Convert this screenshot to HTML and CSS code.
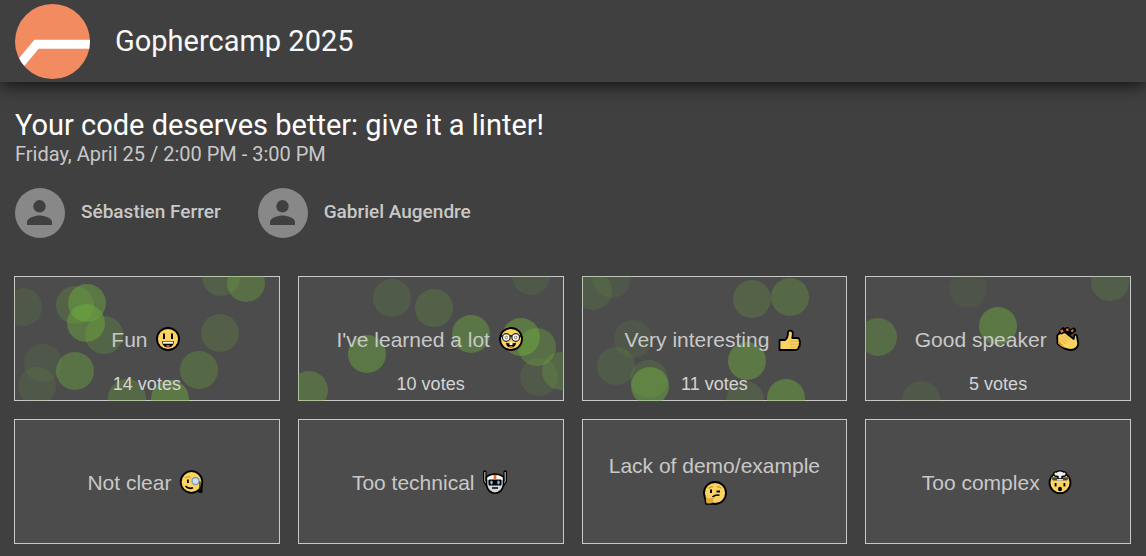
FILE: index.html
```html
<!DOCTYPE html>
<html lang="en">
<head>
<meta charset="utf-8">
<meta name="viewport" content="width=device-width, initial-scale=1">
<title>Gophercamp 2025</title>
<link rel="stylesheet" href="styles.css">
</head>
<body>
<header class="topbar">
  <svg class="logo" viewBox="0 0 75 75" aria-hidden="true">
    <defs><clipPath id="disc"><circle cx="37.500" cy="37.500" r="37.500"/></clipPath></defs>
    <g clip-path="url(#disc)"><path fill="#f28b60" d="M0 0h75v75H0z"/><path d="M0 66L21.500 40.300H76" fill="none" stroke="#fff" stroke-width="9"/></g>
  </svg>
  <h1 class="event">Gophercamp 2025</h1>
</header>
<main class="content">
  <h2 class="talk">Your code deserves better: give it a linter!</h2>
  <p class="time">Friday, April 25 / 2:00 PM - 3:00 PM</p>
  <ul class="speakers">
    <li class="speaker"><svg class="avatar" viewBox="0 0 50 50" aria-hidden="true"><circle cx="25" cy="25" r="25" fill="#888"/><circle cx="24.500" cy="18.300" r="6.200" fill="#404040"/><path fill="#404040" d="M12 37v-3c0-4.300 8.300-6.500 12.500-6.500S37 29.700 37 34v3z"/></svg><span class="name">Sébastien Ferrer</span></li>
    <li class="speaker"><svg class="avatar" viewBox="0 0 50 50" aria-hidden="true"><circle cx="25" cy="25" r="25" fill="#888"/><circle cx="24.500" cy="18.300" r="6.200" fill="#404040"/><path fill="#404040" d="M12 37v-3c0-4.300 8.300-6.500 12.500-6.500S37 29.700 37 34v3z"/></svg><span class="name">Gabriel Augendre</span></li>
  </ul>
  <div class="votes">
    <button type="button" class="card">
      <svg class="bubbles" aria-hidden="true"><circle cx="9" cy="31" r="19" opacity=".12"/><circle cx="61" cy="29" r="19" opacity=".22"/><circle cx="73" cy="27" r="19" opacity=".4"/><circle cx="72" cy="47" r="19" opacity=".4"/><circle cx="90" cy="59" r="19" opacity=".24"/><circle cx="29" cy="87" r="19" opacity=".09"/><circle cx="23" cy="110" r="19" opacity=".12"/><circle cx="61" cy="95" r="19" opacity=".36"/><circle cx="207" cy="1" r="19" opacity=".18"/><circle cx="232" cy="7" r="19" opacity=".32"/><circle cx="206" cy="57" r="19" opacity=".18"/><circle cx="185" cy="94" r="19" opacity=".28"/><circle cx="113" cy="122" r="19" opacity=".27"/><circle cx="156" cy="123" r="19" opacity=".42"/></svg>
      <span class="label">Fun <svg class="emoji" viewBox="0 0 24 24" aria-hidden="true"><circle cx="12" cy="12" r="11" fill="#fbd362" stroke="#000" stroke-width="1.800"/><path d="M7 6.500h2v5.500H7zM15 6.500h2v5.500h-2z"/><path d="M6.200 14.200h11.600c0 4-2.300 6-5.800 6s-5.800-2-5.800-6z"/><path fill="#fff" d="M7 14.700h10v2H7z"/><path fill="#ed6c30" d="M9.500 19q2.500-2 5 0-2.500 1.500-5 0z"/></svg></span>
      <span class="count">14 votes</span>
    </button>
    <button type="button" class="card">
      <svg class="bubbles" aria-hidden="true"><circle cx="94" cy="22" r="19" opacity=".15"/><circle cx="136" cy="32" r="19" opacity=".2"/><circle cx="233" cy="0" r="19" opacity=".12"/><circle cx="173" cy="58" r="19" opacity=".38"/><circle cx="69" cy="78" r="19" opacity=".4"/><circle cx="11" cy="114" r="19" opacity=".32"/><circle cx="223" cy="61" r="19" opacity=".42"/><circle cx="239" cy="71" r="19" opacity=".32"/><circle cx="241" cy="101" r="19" opacity=".13"/><circle cx="263" cy="95" r="19" opacity=".25"/></svg>
      <span class="label">I've learned a lot <svg class="emoji" viewBox="0 0 24 24" aria-hidden="true"><circle cx="12" cy="12" r="11" fill="#fbd362" stroke="#000" stroke-width="1.800"/><path d="M1 9h22" stroke="#000" stroke-width="1.500"/><g fill="#fff" stroke="#222" stroke-width="1.200"><circle cx="7.300" cy="10.500" r="3.800"/><circle cx="16.700" cy="10.500" r="3.800"/></g><g fill="none" stroke="#777"><circle cx="7.300" cy="10.500" r="1.300"/><circle cx="16.700" cy="10.500" r="1.300"/></g><path d="M7 15.700c3 .8 7 .8 10 0 0 3-2 4.800-5 4.800s-5-1.800-5-4.800z"/><path fill="#fff" d="M10.500 15.500h3V18h-3z"/><path fill="#ed6c30" d="M10 19.400q2-1.200 4 0-2 1-4 0z"/></svg></span>
      <span class="count">10 votes</span>
    </button>
    <button type="button" class="card">
      <svg class="bubbles" aria-hidden="true"><circle cx="11" cy="15" r="19" opacity=".14"/><circle cx="30" cy="3" r="19" opacity=".1"/><circle cx="170" cy="23" r="19" opacity=".22"/><circle cx="208" cy="21" r="19" opacity=".28"/><circle cx="51" cy="63" r="19" opacity=".1"/><circle cx="34" cy="90" r="19" opacity=".14"/><circle cx="67" cy="103" r="19" opacity=".16"/><circle cx="68" cy="110" r="19" opacity=".43"/><circle cx="165" cy="85" r="19" opacity=".42"/><circle cx="163" cy="124" r="19" opacity=".17"/><circle cx="204" cy="122" r="19" opacity=".42"/></svg>
      <span class="label">Very interesting <svg class="emoji" viewBox="0 0 24 24" aria-hidden="true"><path fill="#fbd362" stroke="#000" stroke-width="1.800" stroke-linejoin="round" d="M1.500 23V13H7c2-1.500 3-3.500 3-7V5c.5-2 4.500-2 4.800.8.200 2-.5 3.700-.5 5.200H19c2 0 2.800 1.300 2.300 2.600 1 .8 1 2.400.2 3.200.6 1.200.3 2.400-.7 3C20.800 22 19 23 17 23z"/><path d="M12 14.200h9M12 17.200h9M12 20h8" stroke="#dda93f" stroke-width=".9"/></svg></span>
      <span class="count">11 votes</span>
    </button>
    <button type="button" class="card">
      <svg class="bubbles" aria-hidden="true"><circle cx="103" cy="13" r="19" opacity=".08"/><circle cx="245" cy="6" r="19" opacity=".17"/><circle cx="133" cy="50" r="19" opacity=".42"/><circle cx="13" cy="61" r="19" opacity=".3"/><circle cx="56" cy="124" r="19" opacity=".12"/></svg>
      <span class="label">Good speaker <svg class="emoji" viewBox="0 0 24 24" aria-hidden="true"><path d="M5.300 5.200l2-2.200M11.300 4.500V2.500M14.500 5.200l3-2" stroke="#000" stroke-width="5" stroke-linecap="round"/><path fill="#fbd362" stroke="#000" stroke-width="1.800" stroke-linejoin="round" d="M1.500 16.500L1.200 8.500c1-2 3-2.500 4.500-2 2-1.500 4-1 5 0l7 5.500c.6-1.600.2-3 1-4 1-.8 2 0 2.200 1l1.300 7c.5 4-3 7-7.500 7-5.500 0-9.500-3-13.200-6.500z"/><path fill="#d99e2b" d="M2 12.500l7 8.500c-3-1-5-2.500-6.800-4.500z"/><path d="M3.500 11l6 6M5.500 9l6 6M8.500 8l5 5" stroke="#d9a43a" stroke-width=".9"/><path d="M4.700 4.800l2.300-1.500M10.200 2.700h2.400M15.500 3l1.500 1.500" stroke="#ed6c30" stroke-width="2.600"/></svg></span>
      <span class="count">5 votes</span>
    </button>
    <button type="button" class="card">
      <span class="label">Not clear <svg class="emoji" viewBox="0 0 24 24" aria-hidden="true"><path d="M18 12h4.500v10.500q-2 1.500-5-1z"/><circle cx="11.500" cy="12" r="10.800" fill="#fbd362" stroke="#000" stroke-width="1.800"/><path d="M5 8q3-2.500 5.500-.5" fill="none" stroke="#d99e2b" stroke-width="1.400"/><path d="M7 9.500h1.800v3.500H7z"/><circle cx="15.500" cy="11" r="3.500" fill="#c3e3fa" stroke="#8398a8" stroke-width="1.300"/><path d="M20 11.500V20" stroke="#222" stroke-width="1.300"/><path d="M5.500 16q3 3.500 7.500 1.800" fill="none" stroke="#000" stroke-width="1.600"/></svg></span>
    </button>
    <button type="button" class="card">
      <span class="label">Too technical <svg class="emoji" viewBox="0 0 24 24" aria-hidden="true"><path d="M1.800 2v9l2.500 4M22.200 2v9l-2.500 4" stroke="#000" stroke-width="3.600" stroke-linecap="round" stroke-linejoin="round" fill="none"/><path d="M1.800 2v9l2.500 4M22.200 2v9l-2.500 4" stroke="#aaa" stroke-width="1.300" fill="none"/><path fill="#d3d5d7" stroke="#000" stroke-width="1.600" d="M3.500 7C8 3.200 16 3.200 20.500 7v8c-1 5-4 8.200-8.500 8.200S4.500 20 3.500 15z"/><path fill="#fff" d="M4.500 7.500C9 4.300 15 4.300 19.500 7.500V10h-15z"/><path fill="#ed6c30" d="M10.600 4.800h2.800V9h-2.800z"/><rect x="5.500" y="9.500" width="13" height="6" rx="1"/><path d="M9 18h6" stroke="#000" stroke-width="1.500"/><g fill="#61bce8"><ellipse cx="8.500" cy="12.500" rx="1.300" ry="2"/><ellipse cx="15.500" cy="12.500" rx="1.300" ry="2"/></g></svg></span>
    </button>
    <button type="button" class="card">
      <span class="label label-two-line">Lack of demo/example <svg class="emoji" viewBox="0 0 24 24" aria-hidden="true"><circle cx="12" cy="12" r="11" fill="#fbd362" stroke="#000" stroke-width="1.800"/><path d="M5.500 7.500q2-2.500 4.500-1.500M14 6q3-1 4 1.500" fill="none" stroke="#d99e2b" stroke-width="1.400"/><path d="M7 8.500h2V12H7zM13.500 9.500H17v2h-3.500z"/><path d="M9.500 16q3-2.800 7-1.800" fill="none" stroke="#000" stroke-width="1.600"/><path fill="#e0a93a" stroke="#000" stroke-width="1.600" stroke-linejoin="round" d="M1.600 14.500L3 23h6"/><path fill="#e0a93a" d="M2.600 15l2.700 2.500 6-1.200q1 1-1.600 2.200 2 3-2 3.700H3.600z"/></svg></span>
    </button>
    <button type="button" class="card">
      <span class="label">Too complex <svg class="emoji" viewBox="0 0 24 24" aria-hidden="true"><circle cx="12" cy="12.700" r="10.500" fill="#fbd362" stroke="#000" stroke-width="1.800"/><path fill="#d99e2b" d="M3.500 7h17l-.5 3H4z"/><path fill="#444" d="M3.500 7.500h17l-1.500 3H5z"/><path fill="#eee" stroke="#000" stroke-width="1.400" d="M7 6C4.500 4 6 1.500 8.500 2 10 .5 14 .5 15.500 2c2.500-.5 4 2 1.500 4l-3 .5V9h-4V6.500z"/><path fill="#ddd" d="M9 9h6v1.500H9z"/><path d="M6.700 13h1.800v3.500H6.700zM15.500 13h1.800v3.500h-1.800z"/><ellipse cx="12" cy="19" rx="2" ry="2.300"/></svg></span>
    </button>
  </div>
</main>
</body>
</html>
```
FILE: styles.css
```css
* { box-sizing: border-box; }
body {
  margin: 0;
  background: #404040;
  color: #c8c8c8;
  font-family: Roboto, sans-serif;
}
.topbar {
  display: flex;
  align-items: center;
  gap: 25px;
  height: 82px;
  padding: 0 15px;
  background: #404040;
  box-shadow: 0 0 20px #000;
}
.logo { width: 75px; height: 75px; }
.event {
  margin: 0;
  color: #f8f8f8;
  font-size: 29px;
  font-weight: 400;
}
.content { padding: 26px 15px 12px 14px; }
.talk {
  margin: 0;
  padding-left: 1px;
  color: #fff;
  font-size: 29px;
  line-height: 34px;
  font-weight: 400;
}
.time {
  margin: 0;
  padding-left: 1px;
  font-size: 20px;
  line-height: 24px;
}
.speakers {
  display: flex;
  flex-wrap: wrap;
  gap: 37px;
  margin: 22px 0 38px;
  padding: 0 0 0 1px;
  list-style: none;
}
.speaker {
  display: flex;
  align-items: center;
  gap: 16px;
  font-size: 19px;
  font-weight: 500;
}
.name { padding-bottom: 4px; }
.avatar { width: 50px; height: 50px; }
.votes {
  display: grid;
  grid-template-columns: repeat(4, 1fr);
  gap: 18px;
}
.card {
  position: relative;
  display: grid;
  place-items: center;
  min-height: 125px;
  padding: 2px 16px 0;
  border: 1px solid #c8c8c8;
  background: #4c4c4c;
  color: #c8c8c8;
  font-family: "Liberation Sans", Arial, sans-serif;
  text-align: center;
  cursor: pointer;
}
.bubbles {
  position: absolute;
  inset: -1px;
  width: calc(100% + 2px);
  height: calc(100% + 2px);
  fill: #72b83c;
}
.label {
  position: relative;
  font-size: 21px;
  line-height: 28px;
}
.label-two-line { padding-bottom: 6px; }
.emoji {
  width: 24px;
  height: 24px;
  margin: 0 2px 0 3px;
  vertical-align: -4px;
  overflow: visible;
}
.count {
  position: absolute;
  inset: auto 0 6px;
  font-size: 18px;
  line-height: 20px;
  color: #d4d4d4;
}
```
